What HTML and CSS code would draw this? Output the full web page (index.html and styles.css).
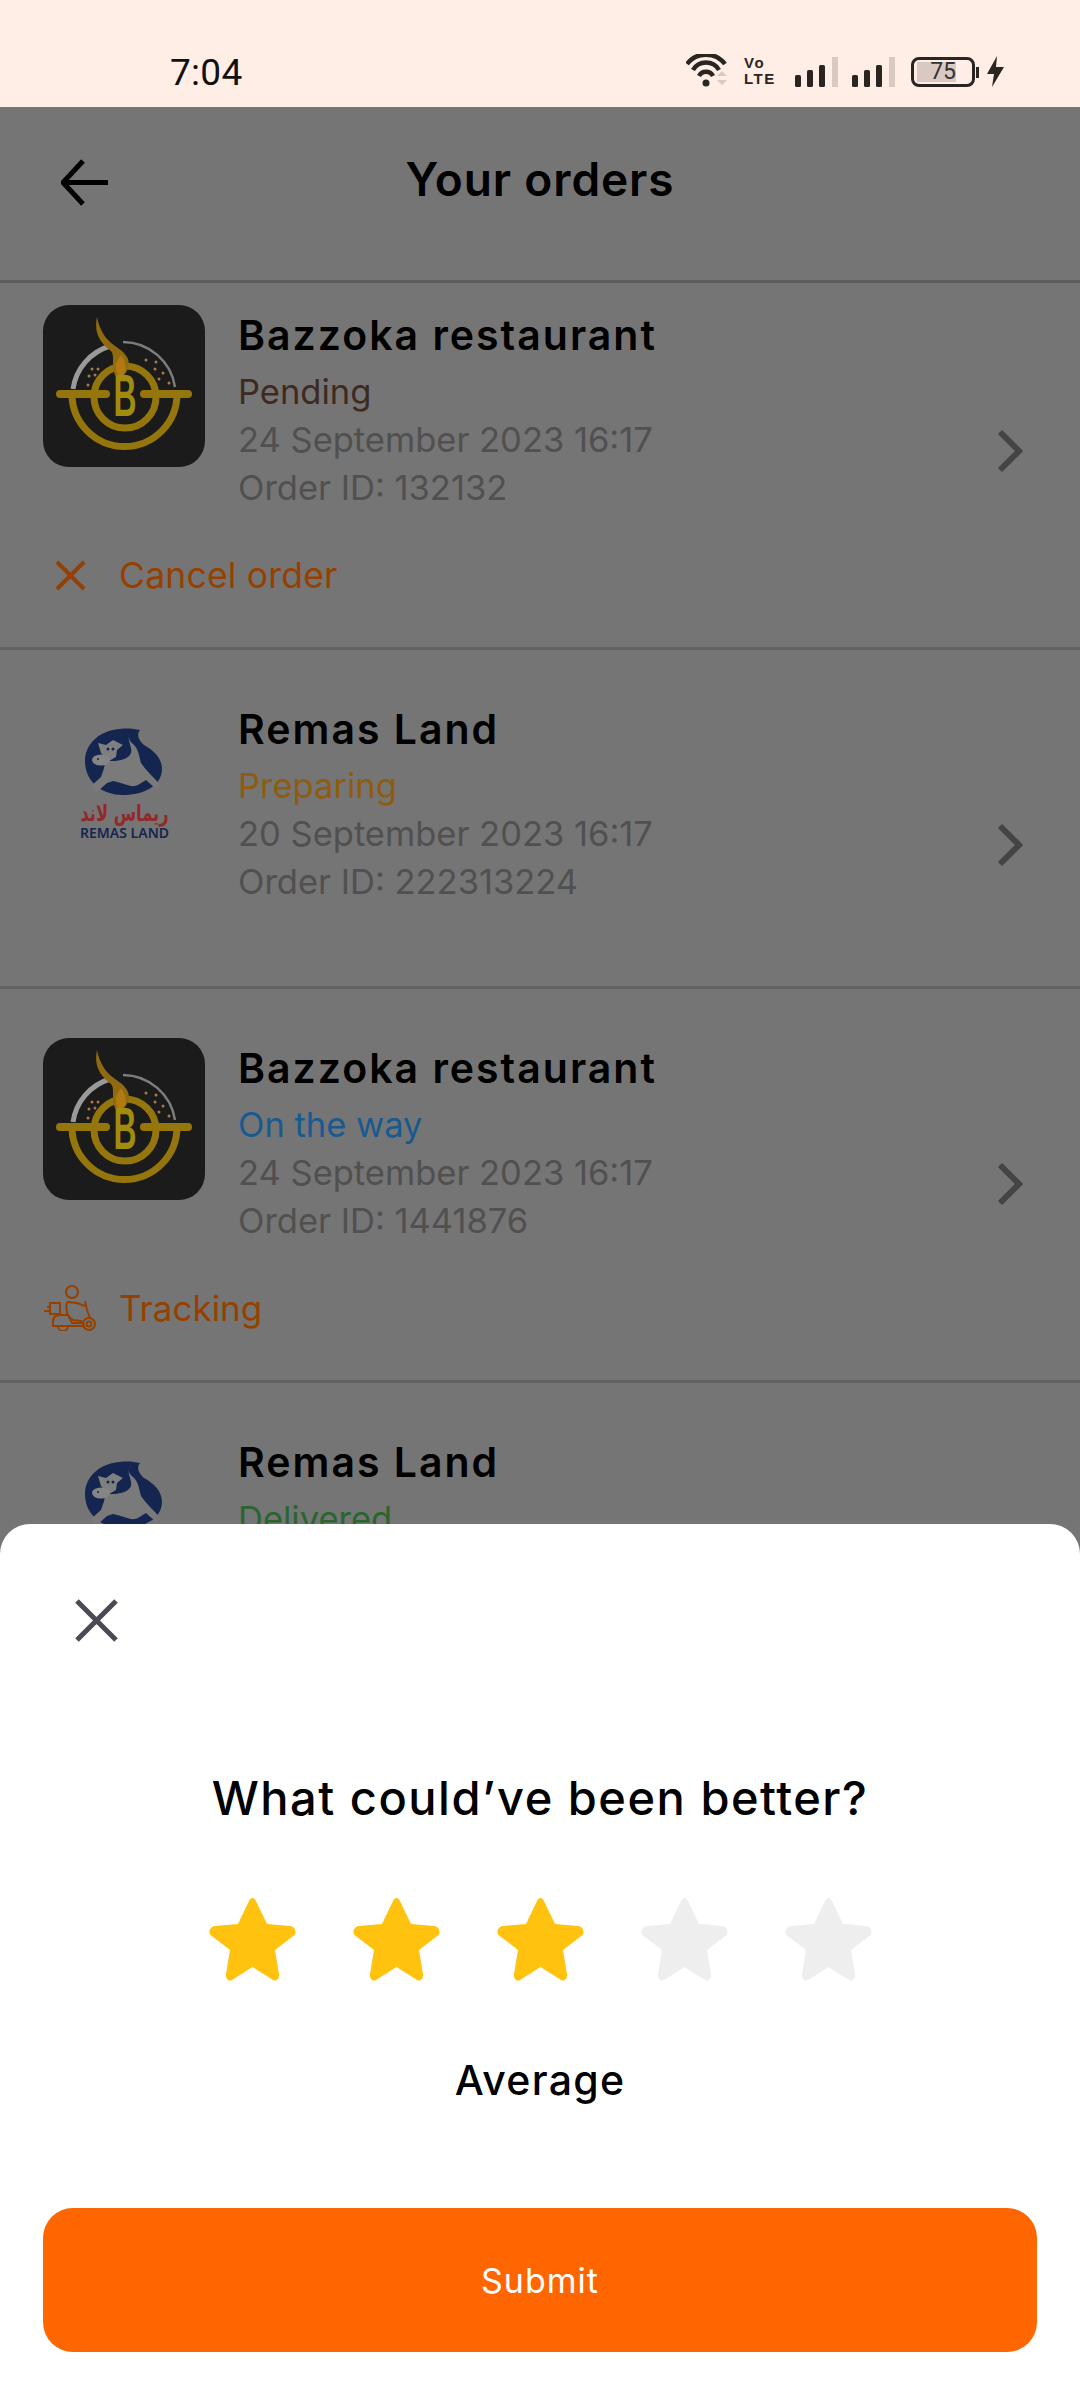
FILE: index.html
```html
<!DOCTYPE html>
<html lang="en">
<head>
  <meta charset="UTF-8" />
  <meta name="viewport" content="width=device-width, initial-scale=1.0"/>
  <title>Your orders</title>
  <link rel="stylesheet" href="styles.css">
</head>
<body>
  <svg width="0" height="0" class="defs">
    <defs>
      <symbol id="bazzoka" viewBox="0 0 162 162">
        <rect width="162" height="162" rx="26" fill="#1b1b1b"/>
        <path d="M30 84 A53 53 0 0 1 67 41" fill="none" stroke="#9a9a9a" stroke-width="5"/>
        <path d="M80 37 A53 53 0 0 1 132 82" fill="none" stroke="#7d7d7d" stroke-width="2.500"/>
        <g fill="#a87a4a">
          <circle cx="49" cy="64" r="1.500"/><circle cx="55" cy="64" r="1.500"/><circle cx="46" cy="71" r="1.500"/>
          <circle cx="52" cy="70" r="1.500"/><circle cx="45" cy="80" r="1.500"/><circle cx="103" cy="55" r="1.500"/>
          <circle cx="113" cy="57" r="1.500"/><circle cx="112" cy="64" r="1.500"/><circle cx="120" cy="68" r="1.500"/>
          <circle cx="116" cy="74" r="1.500"/><circle cx="126" cy="78" r="1.500"/>
        </g>
        <circle cx="82" cy="92" r="31" fill="none" stroke="#94760c" stroke-width="7"/>
        <path d="M29 89 A52.500 52.500 0 0 0 134 89" fill="none" stroke="#94760c" stroke-width="7"/>
        <rect x="13" y="85" width="54" height="8" rx="4" fill="#94760c"/>
        <rect x="97" y="85" width="52" height="8" rx="4" fill="#94760c"/>
        <path d="M54 12 C50 30 60 40 68 46 C72 50 68 62 72 70 L77 75 C82 70 88 62 85 54 C82 46 72 42 66 36 C60 30 56 22 54 12Z" fill="#8f6a10"/>
        <path d="M73 58 L78 50 C82 56 84 62 82 67 L77 74 C74 70 72 64 73 58Z" fill="#b07a10"/>
        <text x="82" y="111" class="logo-b" textLength="23" lengthAdjust="spacingAndGlyphs">B</text>
      </symbol>
      <symbol id="remas" viewBox="0 0 162 162">
        <path d="M77 30 C84 29 92 30 97 31 C93 36 96 42 101 46 C112 52 119 60 119 70 C119 86 102 96 80 96 C58 96 42 82 42 62 C42 44 58 31 77 30Z" fill="#14264f"/>
        <path d="M88 33 C84 37 86 42 90 45 C96 50 96 58 98 64 C102 70 108 76 112 80 L118 87 L113 90 L103 81 C98 84 94 88 88 87 C80 85 76 83 70 82 L64 84 L54 93 L48 87 L58 78 C60 72 62 68 62 62 L70 62 C76 62 86 60 88 54 C90 48 82 40 88 33Z" fill="#7a7a7a"/>
        <path d="M55 44 L63 46 L70 41 L80 46 L74 51 L73 58 L66 62 L58 54Z" fill="#7f7f7f"/>
        <ellipse cx="58" cy="61" rx="9" ry="5.500" fill="#858585"/>
        <circle cx="65" cy="50" r="1.500" fill="#14264f"/>
        <circle cx="70" cy="50" r="1.500" fill="#14264f"/>
        <circle cx="55" cy="60" r="1" fill="#14264f"/>
        <text x="81.500" y="122" class="logo-ar" textLength="88" lengthAdjust="spacingAndGlyphs">ريماس لاند</text>
        <text x="81.500" y="139" class="logo-en" textLength="89" lengthAdjust="spacingAndGlyphs">REMAS LAND</text>
      </symbol>
      <symbol id="chevron" viewBox="0 0 26 44">
        <path d="M3 3 L22 22 L3 41" fill="none" stroke="#444" stroke-width="6"/>
      </symbol>
      <symbol id="star" viewBox="0 0 87 83">
        <path d="M40 3 C41.500 -1 45.500 -1 47 3 L58 26 L81 28 C86 28.500 88 34 85.500 37 L66 52 L70 76 C70.500 81 67 84 64 82 L43.500 69 L23 82 C20 84 16.500 81 17 76 L21 52 L1.500 37 C-1 34 1 28.500 6 28 L29 26 Z"/>
      </symbol>
    </defs>
  </svg>

  <div class="phone">
    <div class="statusbar">
      <span class="clock">7:04</span>
      <div class="status-icons">
        <svg class="ic-wifi" width="41" height="33" viewBox="0 0 41 33">
          <path d="M1 10 A24 24 0 0 1 39 10" fill="none" stroke="#2b2522" stroke-width="4.500"/>
          <path d="M7 16 A15 15 0 0 1 33 16" fill="none" stroke="#2b2522" stroke-width="4.500"/>
          <path d="M13 22 A8 8 0 0 1 27 22" fill="none" stroke="#2b2522" stroke-width="4.500"/>
          <circle cx="20" cy="29" r="3.500" fill="#2b2522"/>
          <path d="M31 22 L36 17 L41 22Z M31 26 L41 26 L36 31Z" fill="#d9c9c2"/>
        </svg>
        <div class="volte"><span>Vo</span><span>LTE</span></div>
        <svg class="ic-signal" width="43" height="30" viewBox="0 0 43 30">
          <rect x="0" y="18" width="6" height="12" rx="1.500" fill="#2b2522"/>
          <rect x="12" y="13" width="6" height="17" rx="1.500" fill="#2b2522"/>
          <rect x="24" y="8" width="6" height="22" rx="1.500" fill="#2b2522"/>
          <rect x="37" y="0" width="6" height="30" fill="#d9c9c2"/>
        </svg>
        <svg class="ic-signal" width="43" height="30" viewBox="0 0 43 30">
          <rect x="0" y="18" width="6" height="12" rx="1.500" fill="#2b2522"/>
          <rect x="12" y="13" width="6" height="17" rx="1.500" fill="#2b2522"/>
          <rect x="24" y="8" width="6" height="22" rx="1.500" fill="#2b2522"/>
          <rect x="37" y="0" width="6" height="30" fill="#d9c9c2"/>
        </svg>
        <div class="battery">
          <div class="battery-body"><span class="battery-fill">75</span></div>
          <div class="battery-tip"></div>
        </div>
        <svg class="ic-bolt" width="19" height="31" viewBox="0 0 19 31">
          <path d="M11 0 L1 18 L8 18 L6 31 L18 11 L10 11 Z" fill="#2b2522"/>
        </svg>
      </div>
    </div>

    <div class="appbar">
      <svg class="back" width="47" height="47" viewBox="0 0 47 47">
        <path d="M22 2 L2 23.500 L22 45 M2 23.500 L47 23.500" fill="none" stroke="#000" stroke-width="5"/>
      </svg>
      <h1>Your orders</h1>
    </div>

    <div class="orders">
      <div class="order has-action scrolled">
        <div class="order-main">
          <svg class="logo"><use href="#bazzoka"/></svg>
          <div class="order-info">
            <h4>Bazzoka restaurant</h4>
            <p class="state pending">Pending</p>
            <p>24 September 2023 16:17</p>
            <p>Order ID: 132132</p>
          </div>
          <svg class="chevron"><use href="#chevron"/></svg>
        </div>
        <div class="order-action">
          <span class="action-icon">
            <svg width="31" height="31" viewBox="0 0 31 31"><path d="M2 2 L29 29 M29 2 L2 29" fill="none" stroke="#964000" stroke-width="4"/></svg>
          </span>
          <span>Cancel order</span>
        </div>
      </div>

      <div class="order">
        <div class="order-main">
          <svg class="logo"><use href="#remas"/></svg>
          <div class="order-info">
            <h4>Remas Land</h4>
            <p class="state preparing">Preparing</p>
            <p>20 September 2023 16:17</p>
            <p>Order ID: 222313224</p>
          </div>
          <svg class="chevron"><use href="#chevron"/></svg>
        </div>
      </div>

      <div class="order has-action">
        <div class="order-main">
          <svg class="logo"><use href="#bazzoka"/></svg>
          <div class="order-info">
            <h4>Bazzoka restaurant</h4>
            <p class="state onway">On the way</p>
            <p>24 September 2023 16:17</p>
            <p>Order ID: 1441876</p>
          </div>
          <svg class="chevron"><use href="#chevron"/></svg>
        </div>
        <div class="order-action">
          <span class="action-icon">
            <svg width="52" height="46" viewBox="0 0 52 46" fill="none" stroke="#964000" stroke-width="2">
              <circle cx="28" cy="7" r="6"/>
              <path d="M23 17 L33 18 L41 21 M41 16 L43 25 L46 33 M23 17 C21 24 23 32 29 35 L37 36 L39 38"/>
              <path d="M6 18 L16 18 L16 29 L6 29 Z M0 26 L6 26 M3 22 L6 22"/>
              <path d="M9 37 C9 32 12 30 16 30 L24 30 L28 38 L39 38 L40 41 L9 41 Z"/>
              <path d="M14 41 A5 5 0 0 0 24 41"/>
              <circle cx="45" cy="39" r="6"/><circle cx="45" cy="39" r="2.500"/>
            </svg>
          </span>
          <span class="tracking">Tracking</span>
        </div>
      </div>

      <div class="order">
        <div class="order-main">
          <svg class="logo"><use href="#remas"/></svg>
          <div class="order-info">
            <h4>Remas Land</h4>
            <p class="state delivered">Delivered</p>
          </div>
        </div>
      </div>
    </div>

    <div class="sheet">
      <svg class="close" width="43" height="43" viewBox="0 0 43 43">
        <path d="M2 2 L41 41 M41 2 L2 41" fill="none" stroke="#4a4a55" stroke-width="5"/>
      </svg>
      <h2>What could’ve been better?</h2>
      <div class="stars">
        <svg class="star on"><use href="#star"/></svg>
        <svg class="star on"><use href="#star"/></svg>
        <svg class="star on"><use href="#star"/></svg>
        <svg class="star"><use href="#star"/></svg>
        <svg class="star"><use href="#star"/></svg>
      </div>
      <p class="rating-label">Average</p>
      <button type="button">Submit</button>
    </div>
  </div>
</body>
</html>
```

FILE: styles.css
```css
* {
  box-sizing: border-box;
}

body {
  font-family: Inter, "Noto Sans", Arial, sans-serif;
  background-color: #757575;
  margin: 0;
  padding: 0;
}

h1, h2, h4, p {
  margin: 0;
}

.defs {
  position: absolute;
}

.phone {
  position: relative;
  display: flex;
  flex-direction: column;
  width: 1080px;
  height: 2400px;
  overflow: hidden;
}

/* status bar */
.statusbar {
  flex: none;
  display: flex;
  align-items: flex-start;
  justify-content: space-between;
  height: 107px;
  padding: 54px 75px 0 170px;
  background-color: #ffeee6;
}

.clock {
  font-family: Roboto, sans-serif;
  font-size: 37px;
  line-height: 38px;
  letter-spacing: 0.3px;
  color: #111;
}

.status-icons {
  display: flex;
  align-items: flex-end;
  height: 33px;
}

.volte {
  display: flex;
  flex-direction: column;
  width: 35px;
  margin-left: 17px;
  font-family: "Liberation Sans", sans-serif;
  font-size: 15px;
  line-height: 16px;
  font-weight: bold;
  letter-spacing: 1.500px;
  color: #2b2522;
}

.ic-signal {
  margin-left: 16px;
}

.ic-signal + .ic-signal {
  margin-left: 14px;
}

.battery {
  display: flex;
  align-items: center;
  margin-left: 16px;
}

.battery-body {
  width: 64px;
  height: 30px;
  padding: 2px 3px;
  border: 3px solid #2b2522;
  border-radius: 8px;
}

.battery-fill {
  display: block;
  width: 39px;
  height: 20px;
  font-family: Roboto, sans-serif;
  font-size: 23px;
  line-height: 20px;
  text-align: right;
  color: #333;
  background-color: #d9c9c2;
}

.battery-tip {
  width: 3px;
  height: 11px;
  margin-left: 1px;
  background-color: #2b2522;
}

.ic-bolt {
  margin-left: 7px;
}

/* app bar */
.appbar {
  flex: none;
  position: relative;
  display: flex;
  align-items: center;
  justify-content: center;
  height: 176px;
  padding-bottom: 30px;
  border-bottom: 3px solid #5e5e62;
}

.appbar h1 {
  font-size: 46px;
  font-weight: 600;
  letter-spacing: 0.9px;
  color: #000;
}

.back {
  position: absolute;
  left: 61px;
  top: 52px;
}

/* order rows */
.orders {
  flex: 1;
  overflow: hidden;
}

.order {
  padding: 49px 0 80px 43px;
  border-bottom: 3px solid #626266;
}

.order.has-action {
  padding-bottom: 48px;
}

.order.scrolled {
  margin-top: -27px;
}

.order-main {
  display: flex;
  align-items: flex-start;
}

.logo {
  flex: none;
  width: 162px;
  height: 162px;
}

.logo-b {
  font-family: "Liberation Sans", sans-serif;
  font-size: 60px;
  font-weight: bold;
  fill: #a08c0e;
  text-anchor: middle;
}

.logo-ar {
  font-family: "DejaVu Sans", sans-serif;
  font-size: 23px;
  font-weight: bold;
  fill: #93282a;
  text-anchor: middle;
}

.logo-en {
  font-family: "Noto Sans", sans-serif;
  font-size: 14px;
  font-weight: 600;
  fill: #14264f;
  text-anchor: middle;
}

.order-info {
  flex: 1;
  margin-left: 33px;
}

.order-info h4 {
  font-size: 41px;
  line-height: 60px;
  font-weight: 600;
  letter-spacing: 2px;
  color: #000;
}

.order-info p {
  font-size: 34.500px;
  line-height: 48px;
  color: #505050;
}

.order-info .state {
  margin-top: 3px;
}

.order-info .pending {
  color: #3f2a22;
}

.order-info .preparing {
  color: #8e5c0e;
}

.order-info .onway {
  color: #185a90;
}

.order-info .delivered {
  color: #2a6530;
}

.chevron {
  flex: none;
  width: 26px;
  height: 44px;
  margin: 124px 57px 0 1px;
}

.order-action {
  display: flex;
  align-items: center;
  height: 48px;
  margin-top: 39px;
  font-size: 35.500px;
  letter-spacing: 0.2px;
  color: #964000;
}

.order-action .tracking {
  font-size: 35px;
  letter-spacing: 0;
}

.action-icon {
  display: flex;
  justify-content: center;
  width: 54px;
  margin-right: 22px;
}

/* bottom sheet */
.sheet {
  position: absolute;
  left: 0;
  right: 0;
  bottom: 0;
  height: 876px;
  padding: 75px 43px 50px;
  background: white;
  border-radius: 30px 30px 0 0;
  text-align: center;
}

.close {
  display: block;
  margin-left: 32px;
}

.sheet h2 {
  margin-top: 126px;
  font-size: 47px;
  line-height: 60px;
  font-weight: 500;
  letter-spacing: 1.500px;
  color: #000;
}

.stars {
  display: flex;
  justify-content: center;
  gap: 57px;
  margin-top: 70px;
}

.star {
  width: 87px;
  height: 83px;
  fill: #eeeeee;
}

.star.on {
  fill: #ffc20e;
}

.rating-label {
  margin-top: 74px;
  font-size: 41px;
  line-height: 50px;
  font-weight: 500;
  letter-spacing: 1.300px;
  color: #000;
}

button {
  display: block;
  width: 100%;
  height: 144px;
  margin-top: 103px;
  background-color: #ff6600;
  border: none;
  border-radius: 30px;
  color: white;
  font-family: inherit;
  font-size: 34px;
  letter-spacing: 1px;
}
```
